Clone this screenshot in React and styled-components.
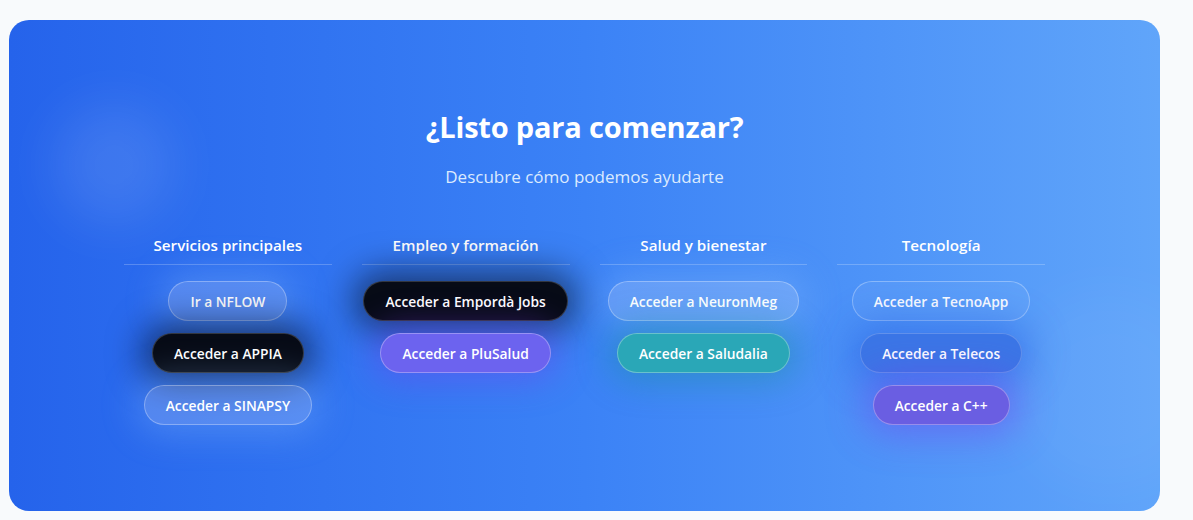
import React from "react";
import styled, { createGlobalStyle, css } from "styled-components";

const Global = createGlobalStyle`
  html, body { margin: 0; padding: 0; background: #f8fafc; }
  body { font-family: "Open Sans", "Noto Sans", sans-serif; }
  * { box-sizing: border-box; }
`;

const Page = styled.div`
  padding: 20px 33px 9px 9px;
`;

const Card = styled.section`
  position: relative;
  overflow: hidden;
  height: 491px;
  border-radius: 20px;
  background: linear-gradient(90deg, #2563eb 0%, #3b82f6 50%, #60a5fa 100%);
  padding-top: 89px;
  display: flex;
  flex-direction: column;
  align-items: center;
`;

const Blob = styled.div`
  position: absolute;
  border-radius: 50%;
  background: rgba(255, 255, 255, ${(p) => p.$o});
  filter: blur(26px);
  width: ${(p) => p.$s}px;
  height: ${(p) => p.$s}px;
  left: ${(p) => p.$x}px;
  top: ${(p) => p.$y}px;
  pointer-events: none;
`;

const Title = styled.h2`
  position: relative;
  margin: 0;
  font-size: 29px;
  line-height: 36px;
  font-weight: 700;
  color: #fff;
  letter-spacing: -0.2px;
`;

const Subtitle = styled.p`
  position: relative;
  margin: 20px 0 0;
  font-size: 17px;
  line-height: 24px;
  color: #dbeafe;
`;

const Grid = styled.div`
  position: relative;
  margin-top: 45px;
  width: 921px;
  display: grid;
  grid-template-columns: repeat(4, 1fr);
  column-gap: 30px;
`;

const Column = styled.div`
  display: flex;
  flex-direction: column;
  align-items: center;
`;

const ColTitle = styled.h3`
  width: 100%;
  margin: 0;
  padding-bottom: 8px;
  border-bottom: 1px solid rgba(255, 255, 255, 0.22);
  text-align: center;
  font-size: 15.2px;
  line-height: 22px;
  font-weight: 600;
  color: #fff;
`;

const Buttons = styled.div`
  margin-top: 16px;
  display: flex;
  flex-direction: column;
  align-items: center;
  gap: 12px;
`;

const variants = {
  glass: css`
    background: rgba(255, 255, 255, 0.2);
    border-color: rgba(255, 255, 255, 0.3);
    box-shadow: 0 0 36px 8px rgba(147, 197, 253, 0.3);
  `,
  outline: css`
    background: rgba(255, 255, 255, 0.05);
    border-color: rgba(255, 255, 255, 0.3);
  `,
  dark: css`
    background: #070b16;
    border-color: rgba(255, 255, 255, 0.18);
    box-shadow: 0 0 34px 10px rgba(3, 7, 18, 0.55);
  `,
  purple: css`
    background: #6c63ef;
    border-color: rgba(255, 255, 255, 0.3);
    box-shadow: 0 0 34px 8px rgba(124, 58, 237, 0.38);
  `,
  violet: css`
    background: #6a5ee2;
    border-color: rgba(255, 255, 255, 0.3);
    box-shadow: 0 0 38px 10px rgba(124, 58, 237, 0.42);
  `,
  teal: css`
    background: #2aa7b7;
    border-color: rgba(255, 255, 255, 0.3);
    box-shadow: 0 0 34px 8px rgba(13, 148, 136, 0.38);
  `,
  blue: css`
    background: #3b76e6;
    border-color: rgba(255, 255, 255, 0.2);
    box-shadow: 0 0 38px 10px rgba(29, 78, 216, 0.42);
  `,
};

const Btn = styled.a`
  display: inline-flex;
  align-items: center;
  justify-content: center;
  height: 40px;
  padding: 0 21px;
  border-radius: 9999px;
  border: 1px solid transparent;
  color: #fff;
  font-size: 13.8px;
  font-weight: 600;
  white-space: nowrap;
  text-decoration: none;
  cursor: pointer;
  ${(p) => variants[p.$v]}
`;

const columns = [
  {
    title: "Servicios principales",
    items: [
      ["Ir a NFLOW", "glass"],
      ["Acceder a APPIA", "dark"],
      ["Acceder a SINAPSY", "glass"],
    ],
  },
  {
    title: "Empleo y formación",
    items: [
      ["Acceder a Empordà Jobs", "dark"],
      ["Acceder a PluSalud", "purple"],
    ],
  },
  {
    title: "Salud y bienestar",
    items: [
      ["Acceder a NeuronMeg", "glass"],
      ["Acceder a Saludalia", "teal"],
    ],
  },
  {
    title: "Tecnología",
    items: [
      ["Acceder a TecnoApp", "outline"],
      ["Acceder a Telecos", "blue"],
      ["Acceder a C++", "violet"],
    ],
  },
];

export default function App() {
  return (
    <Page>
      <Global />
      <Card>
        <Blob $s={120} $x={45} $y={85} $o={0.1} />
        <Blob $s={200} $x={1000} $y={270} $o={0.04} />
        <Title>¿Listo para comenzar?</Title>
        <Subtitle>Descubre cómo podemos ayudarte</Subtitle>
        <Grid>
          {columns.map((c) => (
            <Column key={c.title}>
              <ColTitle>{c.title}</ColTitle>
              <Buttons>
                {c.items.map(([label, v]) => (
                  <Btn key={label} $v={v}>
                    {label}
                  </Btn>
                ))}
              </Buttons>
            </Column>
          ))}
        </Grid>
      </Card>
    </Page>
  );
}
